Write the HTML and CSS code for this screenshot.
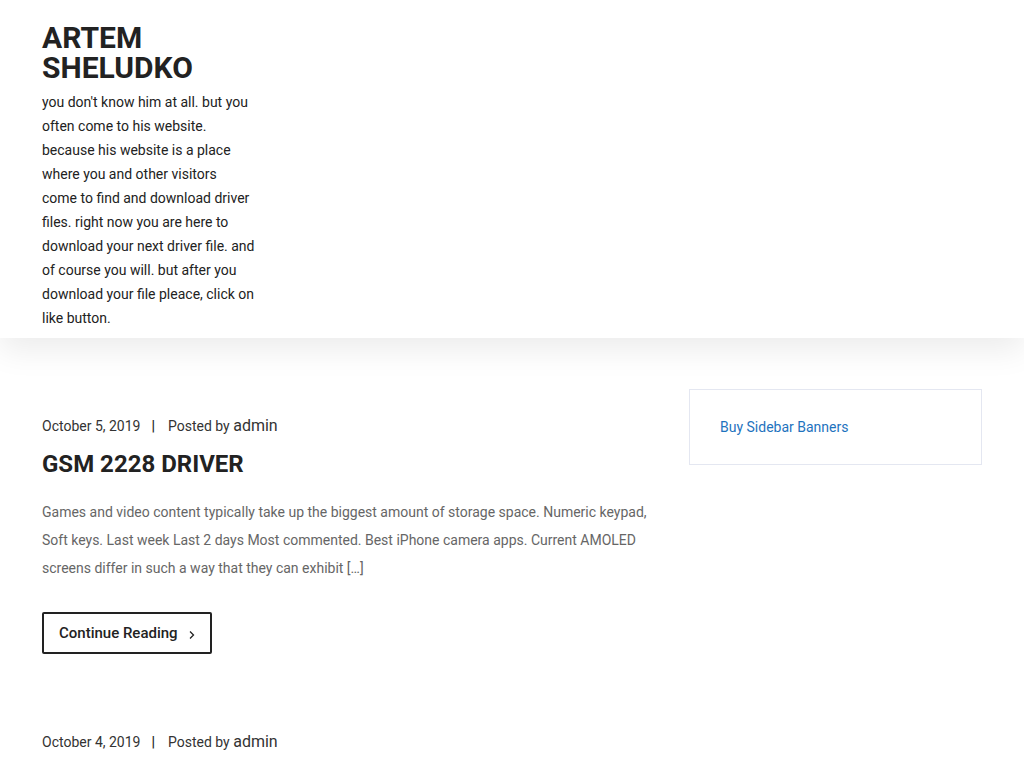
FILE: index.html
```html
<!DOCTYPE html>
<html lang="en">
<head>
<meta charset="utf-8">
<title>Artem Sheludko</title>
<link rel="stylesheet" href="styles.css">
</head>
<body>
<header class="site-header">
  <div class="container">
    <div class="branding">
      <h1 class="site-title">ARTEM SHELUDKO</h1>
      <p class="site-desc">you don't know him at all. but you often come to his website. because his website is a place where you and other visitors come to find and download driver files. right now you are here to download your next driver file. and of course you will. but after you download your file pleace, click on like button.</p>
    </div>
  </div>
</header>
<div class="container content">
  <main class="posts">
    <article class="post">
      <div class="meta"><span class="date">October 5, 2019</span><span class="sep">|</span><span class="by">Posted by <span class="author">admin</span></span></div>
      <h2 class="post-title">GSM 2228 DRIVER</h2>
      <p class="excerpt">Games and video content typically take up the biggest amount of storage space. Numeric keypad, Soft keys. Last week Last 2 days Most commented. Best iPhone camera apps. Current AMOLED screens differ in such a way that they can exhibit […]</p>
      <a class="btn" href="#">Continue Reading <svg class="chev" width="6" height="10" viewBox="0 0 6 10"><path d="M1 1.5 L4.5 5 L1 8.5" fill="none" stroke="#222" stroke-width="1.3"/></svg></a>
    </article>
    <article class="post">
      <div class="meta"><span class="date">October 4, 2019</span><span class="sep">|</span><span class="by">Posted by <span class="author">admin</span></span></div>
      <h2 class="post-title">GSM 2228 DRIVER</h2>
    </article>
  </main>
  <aside class="sidebar">
    <div class="widget"><a href="#">Buy Sidebar Banners</a></div>
  </aside>
</div>
</body>
</html>
```
FILE: styles.css
```css
html, body { margin: 0; padding: 0; background: #fff; }
body { font-family: Roboto, "Liberation Sans", Arial, sans-serif; color: #222; overflow: hidden; }
.container { width: 940px; margin: 0 auto; }
.site-header { background: #fff; padding: 23px 0 8px; box-shadow: 0 12px 30px rgba(0,0,0,0.08); position: relative; z-index: 1; }
.branding { width: 212.6px; }
.site-title { margin: 0; font-size: 30px; line-height: 30px; font-weight: 700; color: #222; }
.site-desc { margin: 7px 0 0; font-size: 14px; line-height: 24px; color: #222; }
.content { display: grid; grid-template-columns: 1fr 293px; column-gap: 30px; padding-top: 51px; }
.post { padding-top: 25px; margin-bottom: 51px; }
.meta { font-size: 14px; line-height: 24px; color: #333; display: flex; align-items: center; }
.sep { font-weight: 700; margin: 0 13px 0 11px; color: #222; }
.author { font-size: 16px; }
.post-title { margin: 11px 0 0; font-size: 24px; line-height: 30px; font-weight: 700; color: #222; }
.excerpt { margin: 19px 0 0; font-size: 14px; line-height: 28px; color: #666; }
.btn { display: inline-flex; align-items: center; margin-top: 30px; height: 42px; box-sizing: border-box; padding: 0 15px 0 15px; border: 2px solid #222; border-radius: 2px; color: #222; text-decoration: none; font-size: 15px; font-weight: 500; }
.chev { margin-left: 11px; margin-top: 3px; }
.widget { border: 1px solid #e4e7f1; padding: 25px 30px 25px; font-size: 14px; line-height: 24px; }
.widget a { color: #1e73be; text-decoration: none; }
```
